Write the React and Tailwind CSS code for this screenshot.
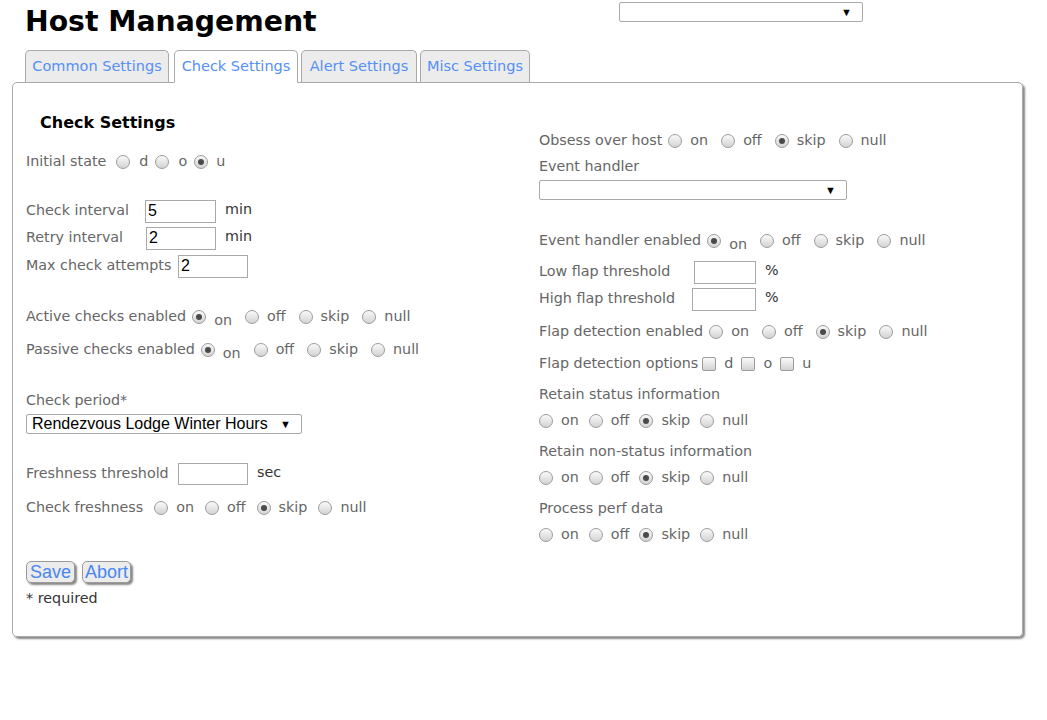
import React from 'react';

const FONT = { fontFamily: '"DejaVu Sans", Verdana, sans-serif' };
const ARIAL = { fontFamily: '"Liberation Sans", Arial, sans-serif' };

function Radio({ checked }) {
  return (
    <span className="inline-flex items-center justify-center w-[14px] h-[14px] rounded-full border border-[#9c9c9c] bg-gradient-to-b from-[#fafafa] to-[#d3d3d3] shrink-0">
      {checked && <span className="w-[6px] h-[6px] rounded-full bg-[#4a4a4a]" />}
    </span>
  );
}

function Check() {
  return (
    <span className="inline-block w-[14px] h-[14px] rounded-[2px] border border-[#9c9c9c] bg-gradient-to-b from-[#fafafa] to-[#d3d3d3] shrink-0" />
  );
}

const OPTS = ['on', 'off', 'skip', 'null'];

function Radios({ selected, first = 0, gap = 13, dropFirst = false }) {
  return (
    <span className="inline-flex items-center">
      {OPTS.map((o, i) => (
        <span key={o} className="inline-flex items-center" style={{ marginLeft: i === 0 ? first : gap }}>
          <Radio checked={selected === i} />
          <span className={'ml-[8px]' + (dropFirst && i === 0 ? ' translate-y-[4px]' : '')}>{o}</span>
        </span>
      ))}
    </span>
  );
}

function TextBox({ value, w = 'w-[70px]', h = 'h-[23px]' }) {
  return (
    <span className={`inline-flex items-center ${w} ${h} border border-[#a9a9a9] bg-white pl-[2px] text-[16px] text-black`} style={ARIAL}>
      {value}
    </span>
  );
}

function Select({ value, w, h = 'h-[20px]' }) {
  return (
    <div className={`flex items-center justify-between ${w} ${h} border border-[#a9a9a9] rounded-[2px] bg-white pl-[5px] pr-[10px] text-[16px] text-black`} style={ARIAL}>
      <span>{value}</span>
      <span className="text-[11px]">▼</span>
    </div>
  );
}

function Row({ className = '', children }) {
  return <div className={`flex items-center h-[24px] ${className}`}>{children}</div>;
}

const TABS = [
  { label: 'Common Settings', cls: 'w-[144px]' },
  { label: 'Check Settings', cls: 'w-[124px] ml-[5px]', active: true },
  { label: 'Alert Settings', cls: 'w-[116px] ml-[3px]' },
  { label: 'Misc Settings', cls: 'w-[110px] ml-[3px]' },
];

export default function App() {
  return (
    <div className="w-[1047px] h-[720px] bg-white text-[14.3px] text-[#666]" style={FONT}>
      <div className="flex pl-[25px] pt-[2px]">
        <h1 className="w-[594px] mt-[6px] h-[28px] leading-[28px] text-[28.3px] font-bold text-black">Host Management</h1>
        <Select value="" w="w-[244px]" />
      </div>

      <div className="flex items-end pl-[25px] mt-[14px] relative z-10 text-[14.5px]">
        {TABS.map((t) => (
          <div
            key={t.label}
            className={`${t.cls} flex items-center justify-center rounded-t-[5px] border border-[#a9a9a9] text-[#5590f6] ${
              t.active ? 'h-[33px] bg-white border-b-white -mb-px' : 'h-[32px] bg-[#ececec] border-b-0'
            }`}
          >
            {t.label}
          </div>
        ))}
      </div>

      <div className="ml-[12px] w-[1011px] h-[555px] border border-[#a9a9a9] rounded-[5px] shadow-[2px_2px_2px_#8a8a8a] flex pl-[13px]">
        <div className="w-[513px] pt-[28px] flex flex-col">
          <Row className="ml-[14px] text-[16px] font-bold text-black">Check Settings</Row>

          <Row className="mt-[15px]">
            <span>Initial state</span>
            <span className="ml-[10px] inline-flex items-center"><Radio /><span className="ml-[9px]">d</span></span>
            <span className="ml-[7px] inline-flex items-center"><Radio /><span className="ml-[9px]">o</span></span>
            <span className="ml-[7px] inline-flex items-center"><Radio checked /><span className="ml-[8px]">u</span></span>
          </Row>

          <Row className="mt-[25px]">
            <span className="w-[119px]">Check interval</span>
            <TextBox value="5" w="w-[71px]" />
            <span className="ml-[9px] -mt-[2px] text-[#333]">min</span>
          </Row>
          <Row className="mt-[3px]">
            <span className="w-[120px]">Retry interval</span>
            <TextBox value="2" w="w-[70px]" />
            <span className="ml-[9px] -mt-[2px] text-[#333]">min</span>
          </Row>
          <Row className="mt-[4px]">
            <span className="w-[152px]">Max check attempts</span>
            <TextBox value="2" w="w-[70px]" />
          </Row>

          <Row className="mt-[27px]">
            <span>Active checks enabled</span>
            <Radios selected={0} first={6} dropFirst />
          </Row>
          <Row className="mt-[9px]">
            <span>Passive checks enabled</span>
            <Radios selected={0} first={6} dropFirst />
          </Row>

          <Row className="mt-[27px]">Check period*</Row>
          <div className="mt-[1px]">
            <Select value="Rendezvous Lodge Winter Hours" w="w-[276px]" />
          </div>

          <Row className="mt-[28px]">
            <span className="w-[152px]">Freshness threshold</span>
            <TextBox value="" w="w-[70px]" h="h-[22px]" />
            <span className="ml-[9px] -mt-[2px] text-[#333]">sec</span>
          </Row>
          <Row className="mt-[10px]">
            <span>Check freshness</span>
            <Radios selected={2} first={11} gap={11} />
          </Row>

          <div className="mt-[41px] flex gap-[7px]" style={ARIAL}>
            <button className="h-[22px] px-[3px] rounded-[5px] border border-[#9a9a9a] bg-[#ececec] shadow-[2px_2px_2px_#888] text-[18px] leading-none text-[#4a86f0]">Save</button>
            <button className="h-[22px] px-[2px] rounded-[5px] border border-[#9a9a9a] bg-[#ececec] shadow-[2px_2px_2px_#888] text-[18px] leading-none text-[#4a86f0]">Abort</button>
          </div>
          <div className="mt-[6px] h-[20px] flex items-center text-[#333]">* required</div>
        </div>

        <div className="w-[480px] pt-[46px] flex flex-col">
          <Row>
            <span>Obsess over host</span>
            <Radios selected={2} first={6} />
          </Row>
          <Row className="mt-[2px]">Event handler</Row>
          <div className="mt-[1px]">
            <Select value="" w="w-[308px]" />
          </div>

          <Row className="mt-[29px]">
            <span>Event handler enabled</span>
            <Radios selected={0} first={6} dropFirst />
          </Row>
          <Row className="mt-[7px]">
            <span className="w-[155px]">Low flap threshold</span>
            <TextBox value="" w="w-[62px]" />
            <span className="ml-[9px] -mt-[2px] text-[#333]">%</span>
          </Row>
          <Row className="mt-[3px]">
            <span className="w-[153px]">High flap threshold</span>
            <TextBox value="" w="w-[64px]" />
            <span className="ml-[9px] -mt-[2px] text-[#333]">%</span>
          </Row>

          <Row className="mt-[9px]">
            <span>Flap detection enabled</span>
            <Radios selected={2} first={6} />
          </Row>
          <Row className="mt-[8px]">
            <span>Flap detection options</span>
            <span className="ml-[4px] inline-flex items-center"><Check /><span className="ml-[8px]">d</span></span>
            <span className="ml-[8px] inline-flex items-center"><Check /><span className="ml-[8px]">o</span></span>
            <span className="ml-[8px] inline-flex items-center"><Check /><span className="ml-[8px]">u</span></span>
          </Row>

          <Row className="mt-[7px]">Retain status information</Row>
          <Row className="mt-[2px]"><Radios selected={2} first={0} gap={10} /></Row>
          <Row className="mt-[7px]">Retain non-status information</Row>
          <Row className="mt-[2px]"><Radios selected={2} first={0} gap={10} /></Row>
          <Row className="mt-[7px]">Process perf data</Row>
          <Row className="mt-[2px]"><Radios selected={2} first={0} gap={10} /></Row>
        </div>
      </div>
    </div>
  );
}
